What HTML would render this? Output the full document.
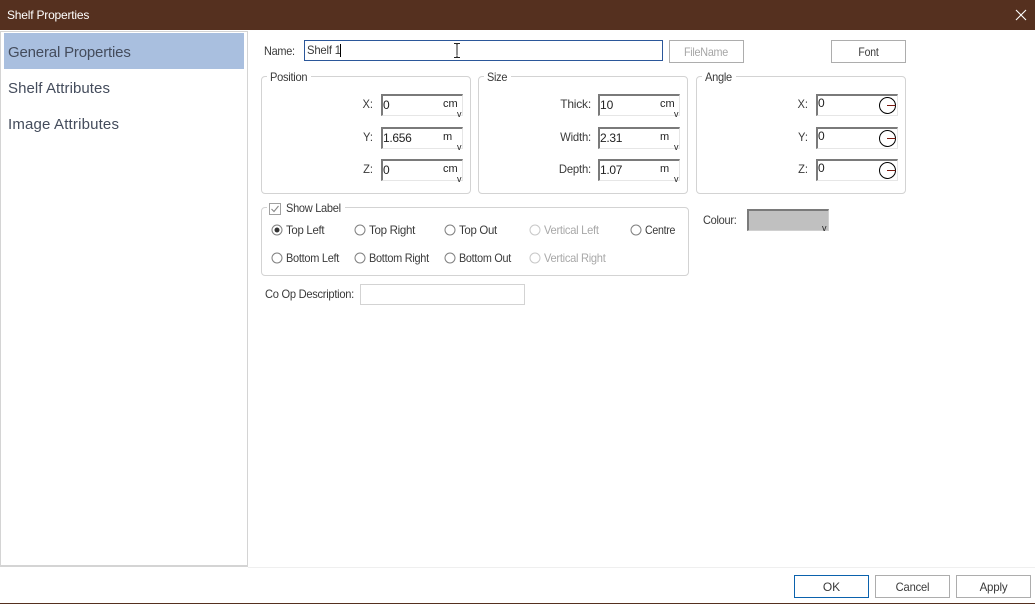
<!DOCTYPE html>
<html><head><meta charset="utf-8">
<style>
html,body{margin:0;padding:0;width:1035px;height:604px;overflow:hidden;background:#fff}
body{position:relative;font-family:"Liberation Sans",sans-serif;font-size:12px;color:#333}
.a{position:absolute;box-sizing:border-box}
.t{position:absolute;white-space:nowrap;line-height:16px;height:16px;font-size:12px;color:#3a3a3a;transform-origin:0 50%}
.r{text-align:right;transform-origin:100% 50%}
.g{position:absolute;box-sizing:border-box;border:1px solid #d3d3d3;border-radius:4px}
.f{position:absolute;box-sizing:border-box;width:82px;height:22px;border-top:2px solid #7a7a7a;border-left:2px solid #7a7a7a;border-right:1px solid #e6e6e6;border-bottom:1px solid #e6e6e6;background:#fff}
.b{position:absolute;box-sizing:border-box;width:75px;height:23px;border:1px solid #adadad;background:#fff}
.c{position:absolute;left:0;right:0;top:3px;text-align:center;line-height:16px;font-size:12px;color:#3a3a3a;white-space:nowrap}
.n{position:absolute;white-space:nowrap;font-size:15px;line-height:20px;color:#444c5c}
svg{position:absolute;overflow:visible}
</style></head><body>

<div class="a" style="left:0;top:0;width:1035px;height:30px;background:#55301f"></div>
<div class="t" style="left:7px;top:7px;color:#fff;font-size:12px;letter-spacing:-.2px">Shelf Properties</div>
<svg style="left:1015px;top:9px" width="12" height="12"><path d="M1 1L11 11M11 1L1 11" stroke="#fff" stroke-width="1.1" fill="none"/></svg>

<div class="a" style="left:0;top:31px;width:248px;height:536px;border:1px solid #d4d4d4;border-bottom-width:2px;border-left-width:1px"></div>
<div class="a" style="left:4px;top:33px;width:240px;height:36px;background:#a9bfdf"></div>
<div class="n" style="left:8px;top:43px;letter-spacing:-.18px">General Properties</div>
<div class="n" style="left:8px;top:79px;letter-spacing:.07px">Shelf Attributes</div>
<div class="n" style="left:8px;top:115px;letter-spacing:.17px">Image Attributes</div>

<div class="t" style="left:264px;top:43px;letter-spacing:-.3px;transform:scaleX(.91)">Name:</div>
<div class="a" style="left:304px;top:40px;width:359px;height:21px;border:1px solid #2b579a"></div>
<div class="t" style="left:307px;top:42px;letter-spacing:-.2px;transform:scaleX(.94)">Shelf 1</div>
<div class="a" style="left:340px;top:44px;width:1px;height:13px;background:#000"></div>
<svg style="left:452px;top:43px" width="10" height="15"><path d="M2 .5H4.500L5 1.500L5.500 .5H8M5 1.500V12.500M2 14.500H4.500L5 13.500L5.500 14.500H8" stroke="#222" stroke-width="1" fill="none"/></svg>
<div class="b" style="left:669px;top:40px"><div class="c" style="left:-1px;color:#a6a6a6;letter-spacing:-.3px;transform:scaleX(.9)">FileName</div></div>
<div class="b" style="left:831px;top:40px"><div class="c" style="letter-spacing:-.2px;transform:scaleX(.87)">Font</div></div>

<div class="g" style="left:261px;top:76px;width:210px;height:118px"></div>
<div class="a" style="left:267px;top:70px;width:44px;height:14px;background:#fff"></div>
<div class="t" style="left:270px;top:69px;letter-spacing:-.3px;transform:scaleX(.925)">Position</div>
<div class="g" style="left:478px;top:76px;width:210px;height:118px"></div>
<div class="a" style="left:484px;top:70px;width:27px;height:14px;background:#fff"></div>
<div class="t" style="left:487px;top:69px;letter-spacing:-.3px;transform:scaleX(.91)">Size</div>
<div class="g" style="left:696px;top:76px;width:210px;height:118px"></div>
<div class="a" style="left:702px;top:70px;width:34px;height:14px;background:#fff"></div>
<div class="t" style="left:705px;top:69px;letter-spacing:-.3px;transform:scaleX(.92)">Angle</div>

<div class="t r" style="left:340px;width:33px;top:96px;transform:scaleX(.93)">X:</div>
<div class="t r" style="left:340px;width:33px;top:129px;transform:scaleX(.93)">Y:</div>
<div class="t r" style="left:340px;width:33px;top:161px;transform:scaleX(.93)">Z:</div>
<div class="f" style="left:381px;top:94px"></div>
<div class="f" style="left:381px;top:127px"></div>
<div class="f" style="left:381px;top:159px"></div>
<div class="t" style="left:383px;top:97px;color:#222">0</div>
<div class="t" style="left:383px;top:130px;color:#222;letter-spacing:-.3px">1.656</div>
<div class="t" style="left:383px;top:162px;color:#222">0</div>
<div class="t" style="left:443px;top:96px;font-size:11px;color:#222">cm</div>
<div class="t" style="left:443px;top:129px;font-size:11px;color:#222">m</div>
<div class="t" style="left:443px;top:161px;font-size:11px;color:#222">cm</div>
<div class="t" style="left:457px;top:106px;font-size:9px;color:#222">v</div>
<div class="t" style="left:457px;top:139px;font-size:9px;color:#222">v</div>
<div class="t" style="left:457px;top:171px;font-size:9px;color:#222">v</div>

<div class="t r" style="left:540px;width:51px;top:96px;letter-spacing:-.2px">Thick:</div>
<div class="t r" style="left:540px;width:51px;top:129px;letter-spacing:-.2px;transform:scaleX(.94)">Width:</div>
<div class="t r" style="left:540px;width:51px;top:161px;letter-spacing:-.2px;transform:scaleX(.94)">Depth:</div>
<div class="f" style="left:598px;top:94px"></div>
<div class="f" style="left:598px;top:127px"></div>
<div class="f" style="left:598px;top:159px"></div>
<div class="t" style="left:600px;top:97px;color:#222">10</div>
<div class="t" style="left:600px;top:130px;color:#222;letter-spacing:-.3px">2.31</div>
<div class="t" style="left:600px;top:162px;color:#222;letter-spacing:-.3px">1.07</div>
<div class="t" style="left:660px;top:96px;font-size:11px;color:#222">cm</div>
<div class="t" style="left:660px;top:129px;font-size:11px;color:#222">m</div>
<div class="t" style="left:660px;top:161px;font-size:11px;color:#222">m</div>
<div class="t" style="left:674px;top:106px;font-size:9px;color:#222">v</div>
<div class="t" style="left:674px;top:139px;font-size:9px;color:#222">v</div>
<div class="t" style="left:674px;top:171px;font-size:9px;color:#222">v</div>

<div class="t r" style="left:770px;width:38px;top:96px;transform:scaleX(.93)">X:</div>
<div class="t r" style="left:770px;width:38px;top:129px;transform:scaleX(.93)">Y:</div>
<div class="t r" style="left:770px;width:38px;top:161px;transform:scaleX(.93)">Z:</div>
<div class="f" style="left:816px;top:94px"></div>
<div class="f" style="left:816px;top:127px"></div>
<div class="f" style="left:816px;top:159px"></div>
<div class="t" style="left:818px;top:95px;color:#222">0</div>
<div class="t" style="left:818px;top:128px;color:#222">0</div>
<div class="t" style="left:818px;top:160px;color:#222">0</div>
<svg style="left:879px;top:97px" width="17" height="17"><circle cx="8.500" cy="8.500" r="8" fill="#fff" stroke="#000" stroke-width="1"/><path d="M8 8.500H16.500" stroke="#7a1a10" stroke-width="1"/></svg>
<svg style="left:879px;top:130px" width="17" height="17"><circle cx="8.500" cy="8.500" r="8" fill="#fff" stroke="#000" stroke-width="1"/><path d="M8 8.500H16.500" stroke="#7a1a10" stroke-width="1"/></svg>
<svg style="left:879px;top:162px" width="17" height="17"><circle cx="8.500" cy="8.500" r="8" fill="#fff" stroke="#000" stroke-width="1"/><path d="M8 8.500H16.500" stroke="#7a1a10" stroke-width="1"/></svg>

<div class="g" style="left:261px;top:207px;width:428px;height:69px"></div>
<div class="a" style="left:267px;top:200px;width:78px;height:16px;background:#fff"></div>
<svg style="left:269px;top:203px" width="12" height="12"><rect x=".5" y=".5" width="11" height="11" fill="#fff" stroke="#a0a0a0"/><path d="M2.500 6L5 8.500L9.500 3" stroke="#888" stroke-width="1.1" fill="none"/></svg>
<div class="t" style="left:286px;top:200px;letter-spacing:-.3px;transform:scaleX(.917)">Show Label</div>

<svg style="left:271px;top:224px" width="12" height="12"><circle cx="6" cy="6" r="5" fill="#fff" stroke="#808080"/><circle cx="6" cy="6" r="2.500" fill="#333"/></svg>
<svg style="left:354px;top:224px" width="12" height="12"><circle cx="6" cy="6" r="5" fill="#fff" stroke="#808080"/></svg>
<svg style="left:444px;top:224px" width="12" height="12"><circle cx="6" cy="6" r="5" fill="#fff" stroke="#808080"/></svg>
<svg style="left:529px;top:224px" width="12" height="12"><circle cx="6" cy="6" r="5" fill="#fff" stroke="#c8c8c8"/></svg>
<svg style="left:630px;top:224px" width="12" height="12"><circle cx="6" cy="6" r="5" fill="#fff" stroke="#808080"/></svg>
<svg style="left:271px;top:252px" width="12" height="12"><circle cx="6" cy="6" r="5" fill="#fff" stroke="#808080"/></svg>
<svg style="left:354px;top:252px" width="12" height="12"><circle cx="6" cy="6" r="5" fill="#fff" stroke="#808080"/></svg>
<svg style="left:444px;top:252px" width="12" height="12"><circle cx="6" cy="6" r="5" fill="#fff" stroke="#808080"/></svg>
<svg style="left:529px;top:252px" width="12" height="12"><circle cx="6" cy="6" r="5" fill="#fff" stroke="#c8c8c8"/></svg>

<div class="t" style="left:286px;top:222px;letter-spacing:-.3px;transform:scaleX(.95)">Top Left</div>
<div class="t" style="left:369px;top:222px;letter-spacing:-.3px;transform:scaleX(.96)">Top Right</div>
<div class="t" style="left:459px;top:222px;letter-spacing:-.3px;transform:scaleX(.95)">Top Out</div>
<div class="t" style="left:544px;top:222px;letter-spacing:-.3px;color:#a8a8a8;transform:scaleX(.93)">Vertical Left</div>
<div class="t" style="left:645px;top:222px;letter-spacing:-.3px;transform:scaleX(.88)">Centre</div>
<div class="t" style="left:286px;top:250px;letter-spacing:-.3px;transform:scaleX(.914)">Bottom Left</div>
<div class="t" style="left:369px;top:250px;letter-spacing:-.3px;transform:scaleX(.91)">Bottom Right</div>
<div class="t" style="left:459px;top:250px;letter-spacing:-.3px;transform:scaleX(.9)">Bottom Out</div>
<div class="t" style="left:544px;top:250px;letter-spacing:-.3px;color:#a8a8a8;transform:scaleX(.925)">Vertical Right</div>

<div class="t" style="left:265px;top:286px;letter-spacing:-.3px;transform:scaleX(.927)">Co Op Description:</div>
<div class="a" style="left:360px;top:284px;width:165px;height:21px;border:1px solid #d3d3d3"></div>

<div class="t" style="left:703px;top:212px;letter-spacing:-.3px;transform:scaleX(.917)">Colour:</div>
<div class="f" style="left:747px;top:209px;background:#c0c0c0;border-right:1px solid #d0d0d0;border-bottom:1px solid #d0d0d0"></div>
<div class="t" style="left:822px;top:220px;font-size:9px;color:#222">v</div>

<div class="a" style="left:248px;top:567px;width:787px;height:1px;background:#efefef"></div>
<div class="b" style="left:794px;top:575px;border-color:#0b62ad"><div class="c">OK</div></div>
<div class="b" style="left:875px;top:575px"><div class="c" style="letter-spacing:-.2px;transform:scaleX(.93)">Cancel</div></div>
<div class="b" style="left:956px;top:575px"><div class="c" style="letter-spacing:-.2px;transform:scaleX(.96)">Apply</div></div>
<div class="a" style="left:0;top:603px;width:1035px;height:1px;background:#55301f"></div>

</body></html>
